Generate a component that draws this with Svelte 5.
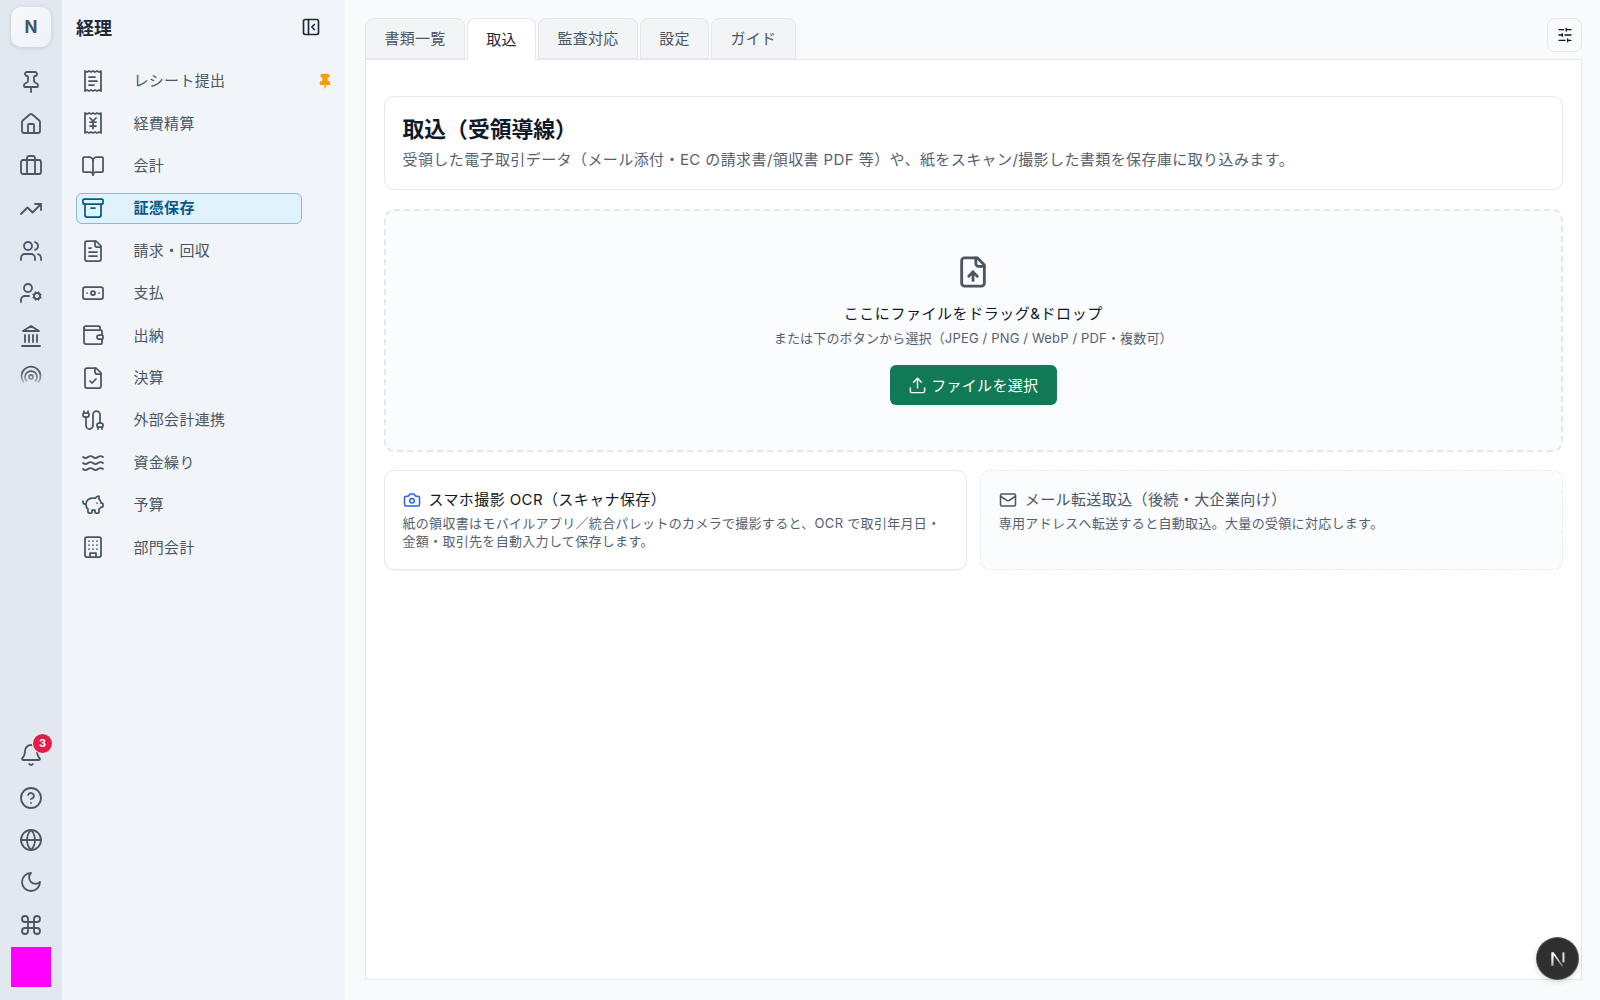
<script>
  const doc = 'M15 2H6a2 2 0 0 0-2 2v16a2 2 0 0 0 2 2h12a2 2 0 0 0 2-2V7Z|M14 2v4a2 2 0 0 0 2 2h4';
  const receipt = 'M4 2v20l2-1 2 1 2-1 2 1 2-1 2 1 2-1 2 1V2l-2 1-2-1-2 1-2-1-2 1-2-1-2 1Z';
  const p = (d) => d.split('|').map((x) => `<path d="${x}"/>`).join('');
  const icons = {
    pin: p('M12 17v5|M9 10.76a2 2 0 0 1-1.11 1.79l-1.78.9A2 2 0 0 0 5 15.24V16a1 1 0 0 0 1 1h12a1 1 0 0 0 1-1v-.76a2 2 0 0 0-1.11-1.79l-1.78-.9A2 2 0 0 1 15 10.76V7a1 1 0 0 1 1-1 2 2 0 0 0 0-4H8a2 2 0 0 0 0 4 1 1 0 0 1 1 1z'),
    house: p('M15 21v-8a1 1 0 0 0-1-1h-4a1 1 0 0 0-1 1v8|M3 10a2 2 0 0 1 .709-1.528l7-5.999a2 2 0 0 1 2.582 0l7 5.999A2 2 0 0 1 21 10v9a2 2 0 0 1-2 2H5a2 2 0 0 1-2-2z'),
    briefcase: p('M16 20V4a2 2 0 0 0-2-2h-4a2 2 0 0 0-2 2v16') + '<rect x="2" y="6" width="20" height="14" rx="2"/>',
    trend: p('M22 7 13.5 15.5 8.5 10.5 2 17|M16 7h6v6'),
    users: p('M16 21v-2a4 4 0 0 0-4-4H6a4 4 0 0 0-4 4v2|M22 21v-2a4 4 0 0 0-3-3.87|M16 3.13a4 4 0 0 1 0 7.75') + '<circle cx="9" cy="7" r="4"/>',
    usercog: p('M10 15H6a4 4 0 0 0-4 4v2|m14.305 16.53.923-.382|m15.228 13.852-.923-.383|m16.852 12.228-.383-.923|m16.852 17.772-.383.924|m19.148 12.228.383-.923|m19.53 18.696-.382-.924|m20.772 13.852.924-.383|m20.772 16.148.924.383') + '<circle cx="18" cy="15" r="3"/><circle cx="9" cy="7" r="4"/>',
    landmark: p('M3 22h18|M6 18v-7|M10 18v-7|M14 18v-7|M18 18v-7|M12 2 20 7H4z'),
    signal: p('M4.5 19a9.5 9.5 0 1 1 15 0|M7.5 18a6 6 0 1 1 9 0') + '<circle cx="12" cy="14" r="2"/>',
    bell: p('M10.268 21a2 2 0 0 0 3.464 0|M3.262 15.326A1 1 0 0 0 4 17h16a1 1 0 0 0 .74-1.673C19.41 13.956 18 12.499 18 8A6 6 0 0 0 6 8c0 4.499-1.411 5.956-2.738 7.326'),
    help: '<circle cx="12" cy="12" r="10"/>' + p('M9.09 9a3 3 0 0 1 5.83 1c0 2-3 3-3 3|M12 17h.01'),
    globe: '<circle cx="12" cy="12" r="10"/>' + p('M12 2a14.5 14.5 0 0 0 0 20 14.5 14.5 0 0 0 0-20|M2 12h20'),
    moon: p('M12 3a6 6 0 0 0 9 9 9 9 0 1 1-9-9Z'),
    command: p('M15 6v12a3 3 0 1 0 3-3H6a3 3 0 1 0 3 3V6a3 3 0 1 0-3 3h12a3 3 0 1 0-3-3'),
    receiptText: p(receipt + '|M14 8H8|M16 12H8|M13 16H8'),
    receiptYen: p(receipt + '|m12 10 3-3|m9 7 3 3v7.5|M9 11h6|M9 15h6'),
    book: p('M12 7v14|M3 18a1 1 0 0 1-1-1V4a1 1 0 0 1 1-1h5a4 4 0 0 1 4 4 4 4 0 0 1 4-4h5a1 1 0 0 1 1 1v13a1 1 0 0 1-1 1h-6a3 3 0 0 0-3 3 3 3 0 0 0-3-3z'),
    archive: '<rect x="2" y="3" width="20" height="5" rx="1"/>' + p('M4 8v11a2 2 0 0 0 2 2h12a2 2 0 0 0 2-2V8|M10 12h4'),
    fileText: p(doc + '|M10 9H8|M16 13H8|M16 17H8'),
    banknote: '<rect x="2" y="6" width="20" height="12" rx="2"/><circle cx="12" cy="12" r="2"/>' + p('M6 12h.01|M18 12h.01'),
    wallet: p('M19 7V4a1 1 0 0 0-1-1H5a2 2 0 0 0 0 4h15a1 1 0 0 1 1 1v4h-3a2 2 0 0 0 0 4h3a1 1 0 0 0 1-1v-2a1 1 0 0 0-1-1|M3 5v14a2 2 0 0 0 2 2h15a1 1 0 0 0 1-1v-4'),
    fileCheck: p(doc + '|m9 15 2 2 4-4'),
    cable: p('M17 21v-2a1 1 0 0 1-1-1v-1a2 2 0 0 1 2-2h2a2 2 0 0 1 2 2v1a1 1 0 0 1-1 1|M19 15V6.5a1 1 0 0 0-7 0v11a1 1 0 0 1-7 0V9|M21 21v-2h-4|M3 5h4V3|M7 5a1 1 0 0 1 1 1v1a2 2 0 0 1-2 2H4a2 2 0 0 1-2-2V6a1 1 0 0 1 1-1V3'),
    waves: p('M2 6c.6.5 1.2 1 2.5 1C7 7 7 5 9.5 5c2.6 0 2.4 2 5 2 2.5 0 2.5-2 5-2 1.3 0 1.9.5 2.5 1|M2 12c.6.5 1.2 1 2.5 1 2.5 0 2.5-2 5-2 2.6 0 2.4 2 5 2 2.5 0 2.5-2 5-2 1.3 0 1.9.5 2.5 1|M2 18c.6.5 1.2 1 2.5 1 2.5 0 2.5-2 5-2 2.6 0 2.4 2 5 2 2.5 0 2.5-2 5-2 1.3 0 1.9.5 2.5 1'),
    piggy: p('M11 17h3v2a1 1 0 0 0 1 1h2a1 1 0 0 0 1-1v-3a3.16 3.16 0 0 0 2-2h1a1 1 0 0 0 1-1v-2a1 1 0 0 0-1-1h-1a5 5 0 0 0-2-4V3a4 4 0 0 0-3.2 1.6l-.3.4H11a6 6 0 0 0-6 6v1a5 5 0 0 0 2 4v3a1 1 0 0 0 1 1h2a1 1 0 0 0 1-1z|M16 10h.01|M2 8v1a2 2 0 0 0 2 2h1'),
    building: '<rect x="4" y="2" width="16" height="20" rx="2"/>' + p('M9 22v-4h6v4|M8 6h.01|M16 6h.01|M12 6h.01|M12 10h.01|M12 14h.01|M16 10h.01|M16 14h.01|M8 10h.01|M8 14h.01'),
    panel: '<rect x="3" y="3" width="18" height="18" rx="2"/>' + p('M9 3v18|m16 15-3-3 3-3'),
    fileUp: p(doc + '|M12 12v6|m15 15-3-3-3 3'),
    upload: p('M21 15v4a2 2 0 0 1-2 2H5a2 2 0 0 1-2-2v-4|m17 8-5-5-5 5|M12 3v12'),
    camera: p('M14.5 4h-5L7 7H4a2 2 0 0 0-2 2v9a2 2 0 0 0 2 2h16a2 2 0 0 0 2-2V9a2 2 0 0 0-2-2h-3l-2.5-3z') + '<circle cx="12" cy="13" r="3"/>',
    mail: '<rect x="2" y="4" width="20" height="16" rx="2"/>' + p('m22 7-8.97 5.7a1.94 1.94 0 0 1-2.06 0L2 7'),
    sliders: p('M21 4h-7|M10 4H3|M21 12h-9|M8 12H3|M21 20h-5|M12 20H3|M14 2v4|M8 10v4|M16 18v4')
  };
  const railTop = ['pin', 'house', 'briefcase', 'trend', 'users', 'usercog', 'landmark'];
  const railBottom = ['help', 'globe', 'moon', 'command'];
  const nav = [
    ['receiptText', 'レシート提出'], ['receiptYen', '経費精算'], ['book', '会計'], ['archive', '証憑保存'],
    ['fileText', '請求・回収'], ['banknote', '支払'], ['wallet', '出納'], ['fileCheck', '決算'],
    ['cable', '外部会計連携'], ['waves', '資金繰り'], ['piggy', '予算'], ['building', '部門会計']
  ];
  const tabs = ['書類一覧', '取込', '監査対応', '設定', 'ガイド'];
</script>

{#snippet icon(name, size, cls = '', sw = 2)}
  <svg class={cls} width={size} height={size} viewBox="0 0 24 24" fill="none" stroke="currentColor" stroke-width={sw} stroke-linecap="round" stroke-linejoin="round" aria-hidden="true">{@html icons[name]}</svg>
{/snippet}

<div class="app">
  <aside class="rail">
    <div class="tile">N</div>
    <div class="rail-list">
      {#each railTop as name}
        <div class="rail-item">{@render icon(name, 24, '', 1.8)}</div>
      {/each}
      <div class="rail-item fade">{@render icon('signal', 24, '', 1.8)}</div>
    </div>
    <div class="rail-bottom">
      <div class="rail-item bell">
        {@render icon('bell', 24, '', 1.8)}
        <span class="badge">3</span>
      </div>
      {#each railBottom as name}
        <div class="rail-item">{@render icon(name, 24, '', 1.8)}</div>
      {/each}
      <div class="magenta"></div>
    </div>
  </aside>

  <nav class="side">
    <header class="side-head">
      <h1>経理</h1>
      {@render icon('panel', 20, 'collapse')}
    </header>
    <ul class="nav">
      {#each nav as [ic, label], i}
        <li class="row" class:active={i === 3}>
          {@render icon(ic, 24, '', 1.75)}
          <span>{label}</span>
          {#if i === 0}
            <svg class="pinned" width="16" height="16" viewBox="0 0 24 24" fill="#f59e0b" stroke="#f59e0b" stroke-width="2" stroke-linecap="round" stroke-linejoin="round" aria-hidden="true">{@html icons.pin}</svg>
          {/if}
        </li>
      {/each}
    </ul>
  </nav>

  <main class="main">
    <div class="top">
      <div class="tabs">
        {#each tabs as t, i}
          <button class="tab" class:on={i === 1}><span>{t}</span></button>
        {/each}
      </div>
      <button class="tune">{@render icon('sliders', 16)}</button>
    </div>
    <section class="panel">
      <div class="intro">
        <h2>取込（受領導線）</h2>
        <p>受領した電子取引データ（メール添付・EC の請求書/領収書 PDF 等）や、紙をスキャン/撮影した書類を保存庫に取り込みます。</p>
      </div>
      <div class="drop">
        {@render icon('fileUp', 34, 'drop-icon')}
        <div class="drop-title">ここにファイルをドラッグ&ドロップ</div>
        <div class="drop-sub">または下のボタンから選択（JPEG / PNG / WebP / PDF・複数可）</div>
        <button class="pick">{@render icon('upload', 19, '', 1.8)}<span>ファイルを選択</span></button>
      </div>
      <div class="cards">
        <article class="card">
          <h3>{@render icon('camera', 18, 'cam')}スマホ撮影 OCR（スキャナ保存）</h3>
          <p>紙の領収書はモバイルアプリ／統合パレットのカメラで撮影すると、OCR で取引年月日・金額・取引先を自動入力して保存します。</p>
        </article>
        <article class="card later">
          <h3>{@render icon('mail', 18, 'ml')}メール転送取込（後続・大企業向け）</h3>
          <p>専用アドレスへ転送すると自動取込。大量の受領に対応します。</p>
        </article>
      </div>
    </section>
  </main>

  <div class="dev">
    <svg width="20" height="20" viewBox="0 0 18 18" aria-hidden="true">
      <defs><linearGradient id="ng" x1="0.3" y1="0.2" x2="0.8" y2="1"><stop offset="0" stop-color="#fff"/><stop offset="1" stop-color="#fff" stop-opacity=".35"/></linearGradient></defs>
      <path d="M3 3h2l9 12.5h-1.8L5 5.5V15H3z" fill="url(#ng)"/><rect x="13" y="3" width="1.8" height="9" fill="#ddd"/>
    </svg>
  </div>
</div>

<style>
  :global(body) {
    margin: 0;
    background: #f9fafb;
    font-family: Inter, "Noto Sans CJK JP", "Noto Sans", sans-serif;
    color: #111827;
  }
  .app { display: flex; height: 1000px; width: 1600px; overflow: hidden; position: relative; }
  svg { display: block; flex: none; }

  .rail { width: 62px; flex: none; background: #e2e8f0; display: flex; flex-direction: column; align-items: center; color: #4b5563; padding-top: 7px; box-sizing: border-box; }
  .tile { width: 40px; height: 40px; border-radius: 10px; background: linear-gradient(135deg, #f8fafc, #eef2f7); box-shadow: 0 1px 4px rgba(15, 23, 42, .14); display: flex; align-items: center; justify-content: center; font: 700 17px Inter, sans-serif; color: #475569; }
  .rail-list { margin-top: 13.5px; display: flex; flex-direction: column; }
  .rail-item { height: 42.35px; width: 40px; display: flex; align-items: center; justify-content: center; position: relative; }
  .fade { height: 36px; -webkit-mask-image: linear-gradient(#000 40%, transparent 85%); mask-image: linear-gradient(#000 40%, transparent 85%); }
  .rail-bottom { margin-top: auto; display: flex; flex-direction: column; align-items: center; padding-bottom: 13px; }
  .badge { position: absolute; left: 21px; top: -1px; width: 21px; height: 21px; border-radius: 50%; background: #e11d48; color: #fff; border: 1px solid #fff; box-sizing: border-box; font: 700 11px/19px Inter, sans-serif; text-align: center; }
  .magenta { width: 40px; height: 40px; background: #ff00ff; margin-top: 1px; }

  .side { width: 283px; flex: none; box-sizing: border-box; background: #f1f5f9; padding: 0 0 0 14px; }
  .side-head { height: 53px; width: 245px; display: flex; align-items: center; justify-content: space-between; color: #1f2937; }
  h1 { margin: 0; font-size: 18px; font-weight: 700; color: #1f2937; }
  .nav { list-style: none; margin: 12.5px 0 0; padding: 0; display: flex; flex-direction: column; gap: 11.4px; color: #4b5563; }
  .row { width: 226px; height: 31px; box-sizing: border-box; display: flex; align-items: center; padding-left: 4px; border: 1px solid transparent; border-radius: 6px; position: relative; font-size: 15px; letter-spacing: .3px; }
  .row span { margin: -2.5px 0 0 28.5px; }
  .active { background: #e0f2fe; border-color: #8db8cb; color: #075985; font-weight: 700; }
  .pinned { position: absolute; left: 239.5px; top: 6.5px; }

  .main { flex: 1; min-width: 0; padding: 18px 18px 20px 20px; display: flex; flex-direction: column; box-sizing: border-box; }
  .top { display: flex; justify-content: space-between; align-items: flex-start; height: 41px; }
  .tabs { display: flex; gap: 2px; height: 41px; position: relative; z-index: 1; }
  .tab { height: 41px; padding: 0 18.4px; border: 1px solid #e5e7eb; border-radius: 8px 8px 0 0; background: #f3f4f6; color: #4b5563; font: 400 15px Inter, "Noto Sans CJK JP", sans-serif; letter-spacing: .25px; }
  .tab span { display: block; margin-top: -2px; }
  .tab.on { background: #fff; color: #1f2937; border-bottom-color: #fff; height: 42px; }
  .tune { width: 35px; height: 34px; padding: 0; border: 1px solid #e5e7eb; border-radius: 8px; background: #f9fafb; color: #111827; display: flex; align-items: center; justify-content: center; }
  .panel { flex: 1; background: #fff; border: 1px solid #e5e7eb; padding: 36px 18px 0 17.5px; display: flex; flex-direction: column; gap: 19px; }

  .intro { height: 94px; box-sizing: border-box; border: 1px solid #e5e7eb; border-radius: 10px; padding: 17px 18px 0; }
  h2 { margin: 0; font-size: 21.8px; line-height: 30px; font-weight: 700; color: #111827; }
  .intro p { margin: 5px 0 0; font-size: 15px; letter-spacing: .41px; line-height: 22px; color: #566070; }

  .drop { height: 243px; box-sizing: border-box; border: 2px dashed #e5e7eb; border-radius: 10px; background: #fbfcfe; display: flex; flex-direction: column; align-items: center; padding-top: 44px; }
  :global(.drop-icon) { color: #4b5563; }
  .drop-title { margin-top: 13px; font-size: 15px; letter-spacing: .55px; line-height: 24px; color: #111827; font-weight: 400; }
  .drop-sub { font-size: 13px; letter-spacing: .16px; line-height: 24px; color: #566070; }
  .pick { margin-top: 15px; width: 167px; height: 40px; border: 0; border-radius: 6px; background: #0f7a55; color: #fff; display: flex; align-items: center; justify-content: center; gap: 4px; font: 400 15px Inter, "Noto Sans CJK JP", sans-serif; letter-spacing: .3px; padding: 0; }
  .pick span { margin-top: -2px; }

  .cards { display: grid; grid-template-columns: 1fr 1fr; gap: 13px; margin-top: -1px; }
  .card { height: 100px; box-sizing: border-box; border: 1px solid #e5e7eb; border-radius: 10px; padding: 18px 18px 0; box-shadow: 0 1px 2px rgba(15, 23, 42, .06); }
  .later { border: 1px dashed #e5e7eb; background: #fbfcfe; box-shadow: none; color: #4b5563; }
  h3 { margin: 0; display: flex; align-items: center; gap: 8px; font-size: 15px; line-height: 22px; font-weight: 400; letter-spacing: .4px; }
  :global(.cam) { color: #2563eb; }
  .card p { margin: 3px 0 0; font-size: 13px; letter-spacing: .31px; line-height: 18px; color: #566070; }

  .dev { position: absolute; left: 1537px; top: 938px; width: 41px; height: 41px; border-radius: 50%; background: #2f2f2f; box-shadow: 0 0 0 1px #555, 0 2px 6px rgba(0,0,0,.2); display: flex; align-items: center; justify-content: center; }
</style>
